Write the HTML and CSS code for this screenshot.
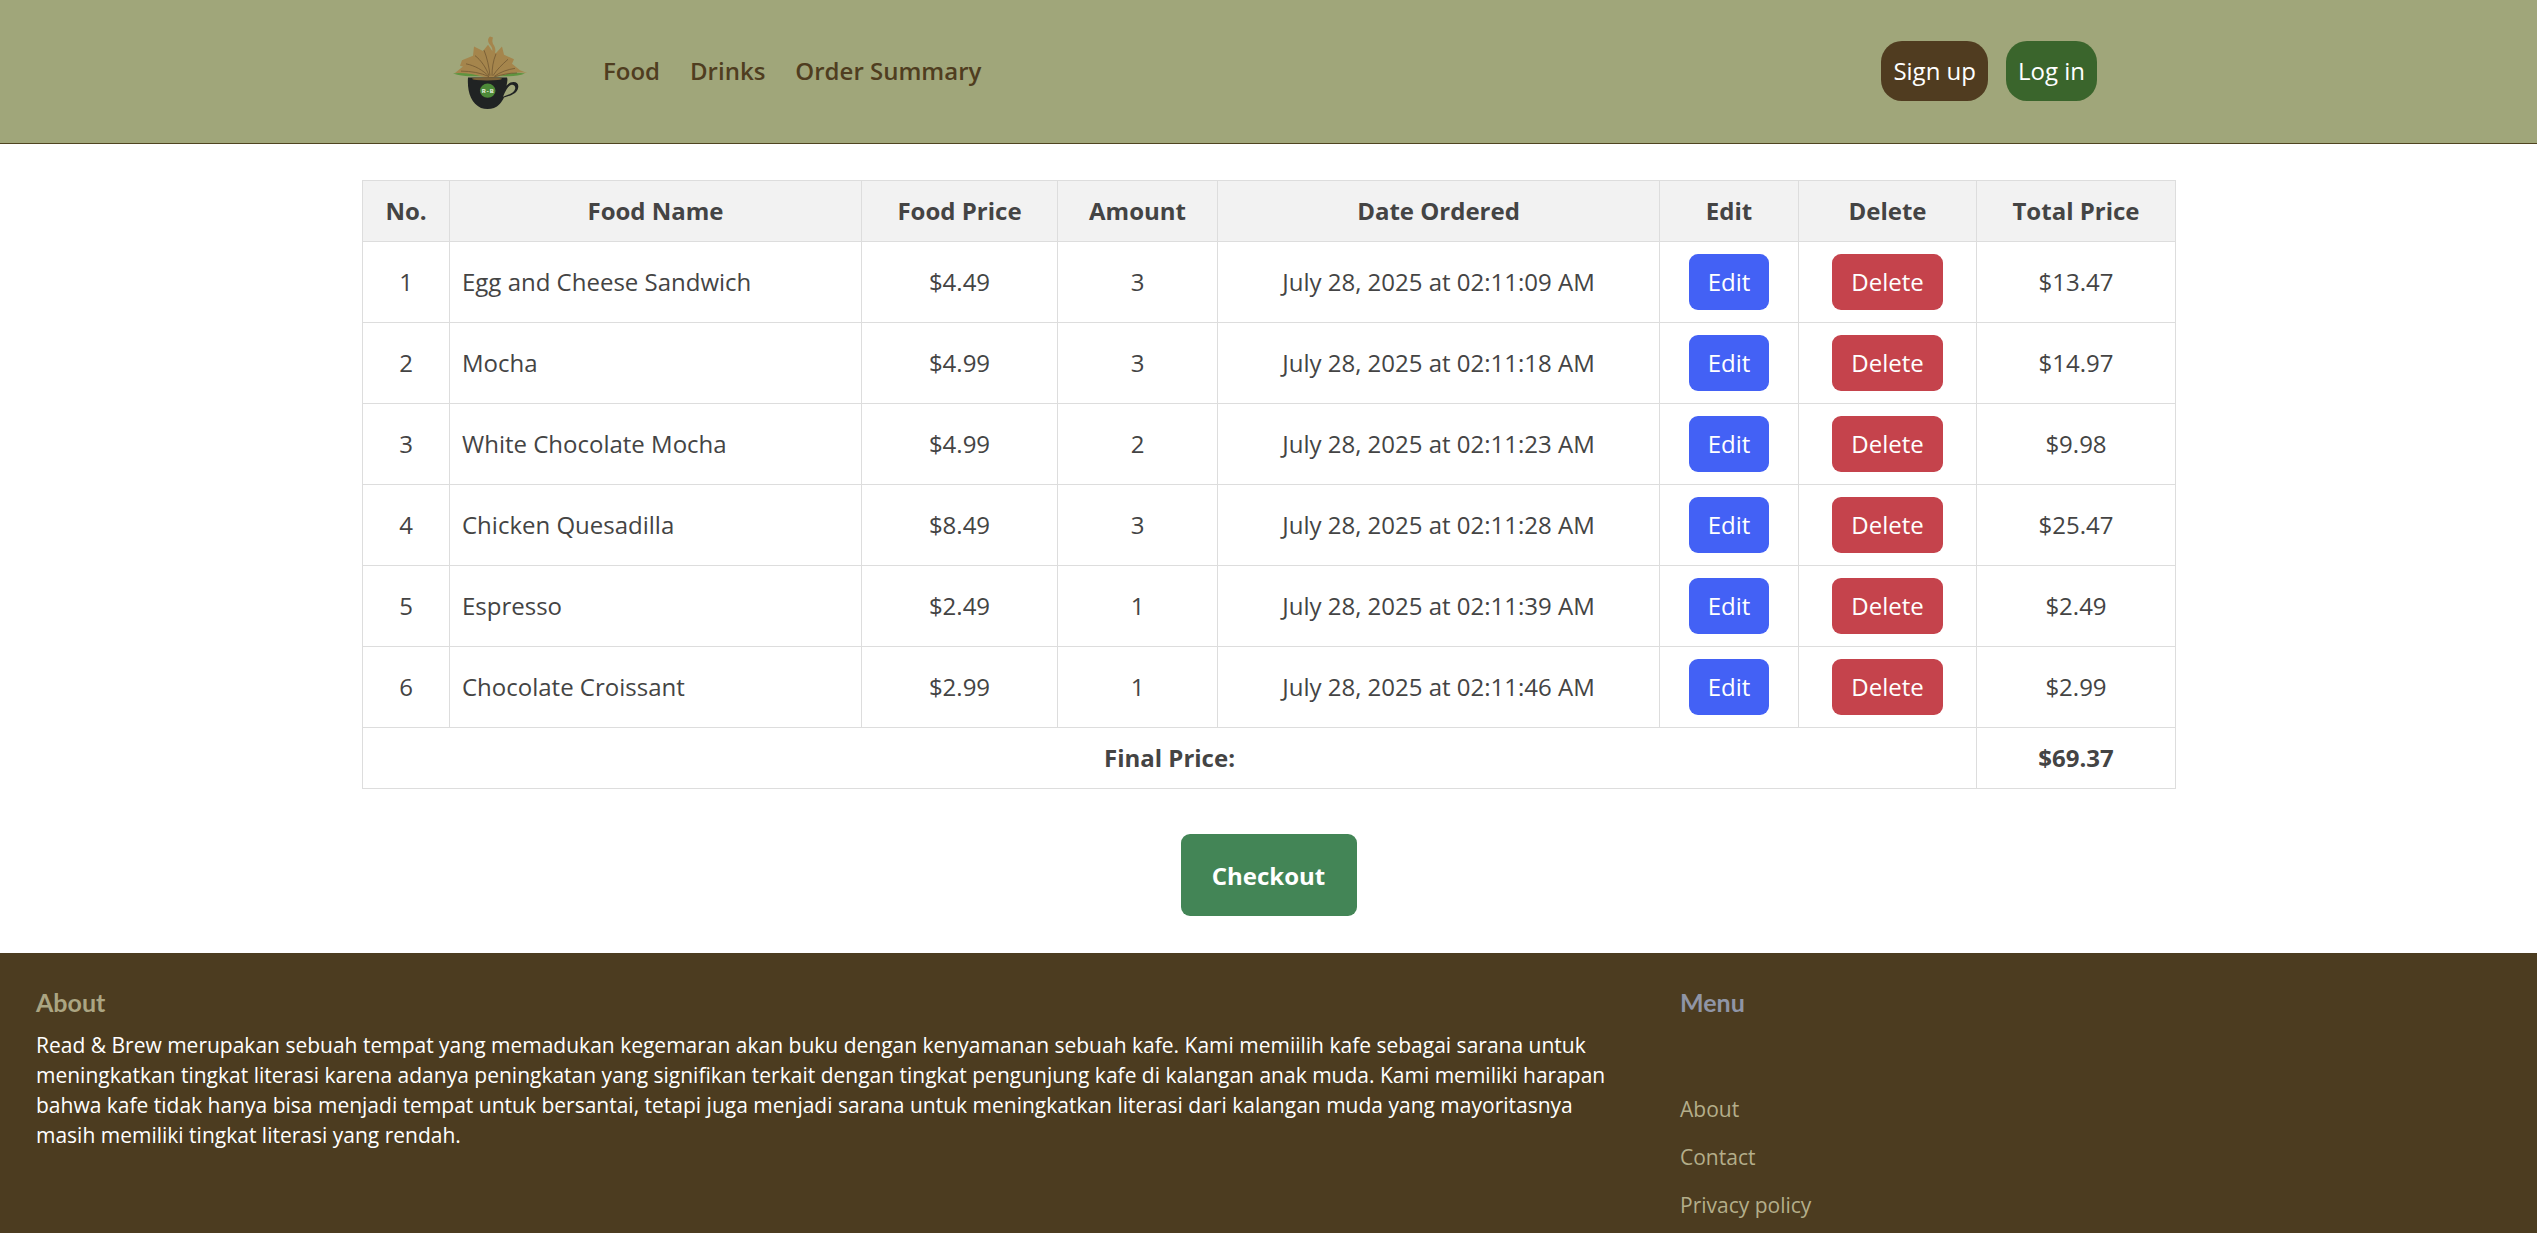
FILE: index.html
```html
<!DOCTYPE html>
<html lang="en">
<head>
<meta charset="utf-8">
<title>Order Summary</title>
<link rel="stylesheet" href="styles.css">
</head>
<body>
<header class="navbar">
  <div class="nav-inner">
    <a class="brand" href="#" aria-label="Read and Brew">
      <svg class="logo" viewBox="0 0 100 90" width="100" height="90">
        <g transform="translate(0 2.300) scale(1 .911)">
          <path d="M13 49.500c8-1 12-1 18 0l19 4 19-4c6-1 10-1 16 0-5 2-10 3-16 3H30c-6 0-11-1-17-3z" fill="#5f9440"/>
          <path d="M50 9c-3 3-2 6 0 9 3 4 3 7 1 10l2 3c3-4 3-8 1-12-2-3-2-6-1-9z" fill="#a5854c"/>
          <path d="M15 49l8-7-3-1 2-6 11-5 1-10 9 5 5-7 5 8 3 1 6-7 2 9 10 5-2 5 8 7 7 3c-9-1-16 0-22 2l-15 4-15-4c-7-2-13-2-20-2z" fill="#a5854c"/>
          <path d="M21 47c10 0 20 2 28 6M26 39c9 2 17 7 23 14M35 30c6 5 11 13 14 22M44 24c3 8 5 18 6 28M52 52c0-8 1-16 4-24M53 52c4-7 9-12 15-18M54 53c6-5 14-8 21-9M55 53c7-2 14-4 22-4" fill="none" stroke="#6e5530" stroke-width=".8"/>
          <path d="M28 54h39c1 3 0 6-.5 9 2-2.500 4-4 7-4 4 0 5.500 3 4.500 7-1 5-7 8-14 10-2 5-6 10-10 11.500-4 1.500-9 1.500-13 0-10-5-14-18-13-33.500z" fill="#202323"/>
          <path d="M63 75c6-2 11-4 12-8 1-3-1-5-3-5-3 0-6 5-9 13z" fill="#a0a67a"/>
          <ellipse cx="47" cy="55.500" rx="15" ry="1.800" fill="#7d6337"/>
          <circle cx="47.700" cy="68.500" r="7.800" fill="#4d8a38"/>
          <text class="logo-text" x="47.700" y="70.500">R-B</text>
        </g>
      </svg>
    </a>
    <nav class="nav-links">
      <a href="#">Food</a>
      <a href="#">Drinks</a>
      <a href="#">Order Summary</a>
    </nav>
    <div class="nav-actions">
      <a class="pill pill-brown" href="#">Sign up</a>
      <a class="pill pill-green" href="#">Log in</a>
    </div>
  </div>
</header>

<main class="content">
  <table class="orders">
    <colgroup>
      <col class="c-no"><col class="c-name"><col class="c-price"><col class="c-amount"><col class="c-date"><col class="c-edit"><col class="c-del"><col class="c-total">
    </colgroup>
    <thead>
      <tr><th>No.</th><th>Food Name</th><th>Food Price</th><th>Amount</th><th>Date Ordered</th><th>Edit</th><th>Delete</th><th>Total Price</th></tr>
    </thead>
    <tbody>
      <tr><td>1</td><td class="left">Egg and Cheese Sandwich</td><td>$4.49</td><td>3</td><td>July 28, 2025 at 02:11:09 AM</td><td><a class="btn btn-edit" href="#">Edit</a></td><td><a class="btn btn-del" href="#">Delete</a></td><td>$13.47</td></tr>
      <tr><td>2</td><td class="left">Mocha</td><td>$4.99</td><td>3</td><td>July 28, 2025 at 02:11:18 AM</td><td><a class="btn btn-edit" href="#">Edit</a></td><td><a class="btn btn-del" href="#">Delete</a></td><td>$14.97</td></tr>
      <tr><td>3</td><td class="left">White Chocolate Mocha</td><td>$4.99</td><td>2</td><td>July 28, 2025 at 02:11:23 AM</td><td><a class="btn btn-edit" href="#">Edit</a></td><td><a class="btn btn-del" href="#">Delete</a></td><td>$9.98</td></tr>
      <tr><td>4</td><td class="left">Chicken Quesadilla</td><td>$8.49</td><td>3</td><td>July 28, 2025 at 02:11:28 AM</td><td><a class="btn btn-edit" href="#">Edit</a></td><td><a class="btn btn-del" href="#">Delete</a></td><td>$25.47</td></tr>
      <tr><td>5</td><td class="left">Espresso</td><td>$2.49</td><td>1</td><td>July 28, 2025 at 02:11:39 AM</td><td><a class="btn btn-edit" href="#">Edit</a></td><td><a class="btn btn-del" href="#">Delete</a></td><td>$2.49</td></tr>
      <tr><td>6</td><td class="left">Chocolate Croissant</td><td>$2.99</td><td>1</td><td>July 28, 2025 at 02:11:46 AM</td><td><a class="btn btn-edit" href="#">Edit</a></td><td><a class="btn btn-del" href="#">Delete</a></td><td>$2.99</td></tr>
    </tbody>
    <tfoot>
      <tr><th colspan="7">Final Price:</th><th>$69.37</th></tr>
    </tfoot>
  </table>
  <div class="checkout-row"><a class="checkout" href="#">Checkout</a></div>
</main>

<footer class="footer">
  <section class="about">
    <h2 class="foot-title">About</h2>
    <p class="foot-text">Read &amp; Brew merupakan sebuah tempat yang memadukan kegemaran akan buku dengan kenyamanan sebuah kafe. Kami memiilih kafe sebagai sarana untuk meningkatkan tingkat literasi karena adanya peningkatan yang signifikan terkait dengan tingkat pengunjung kafe di kalangan anak muda. Kami memiliki harapan bahwa kafe tidak hanya bisa menjadi tempat untuk bersantai, tetapi juga menjadi sarana untuk meningkatkan literasi dari kalangan muda yang mayoritasnya masih memiliki tingkat literasi yang rendah.</p>
  </section>
  <section class="menu">
    <h2 class="foot-title foot-title-menu">Menu</h2>
    <ul class="foot-links">
      <li><a href="#">About</a></li>
      <li><a href="#">Contact</a></li>
      <li><a href="#">Privacy policy</a></li>
    </ul>
  </section>
</footer>
</body>
</html>
```

FILE: styles.css
```css
html, body { margin: 0; padding: 0; height: 1233px; overflow: hidden; background: #fff; }
body { font-family: "Open Sans", "Noto Sans", sans-serif; font-size: 24px; line-height: 1.5; color: #444; }
a { text-decoration: none; color: inherit; }

.navbar { height: 143px; background: #a0a67a; border-bottom: 1px solid #4f4420; }
.nav-inner { height: 100%; box-sizing: border-box; display: flex; align-items: center; padding: 0 440px 2px 440px; }
.brand { display: flex; }
.logo-text { font-family: "Liberation Mono", monospace; font-size: 6.500px; font-weight: 700; fill: #e8f0e0; text-anchor: middle; }
.nav-links { display: flex; gap: 30px; margin-left: 63px; color: #4f3d20; font-weight: 600; }
.nav-actions { display: flex; gap: 18px; margin-left: auto; }
.pill { height: 60px; display: flex; align-items: center; padding: 0 12px; border-radius: 21px; color: #fff; }
.pill-brown { background: #503c20; }
.pill-green { background: #3a652c; }

.content { padding-top: 36px; }
.orders { width: 1813px; margin: 0 0 0 362px; border-collapse: collapse; table-layout: fixed; }
.orders th, .orders td { border: 1.5px solid #ddd; padding: 12px; text-align: center; vertical-align: middle; }
.orders thead th { background: #f2f2f2; }
.orders td { height: 56px; }
.orders .left { text-align: left; }
.c-no { width: 87px; }
.c-name { width: 412px; }
.c-price { width: 196px; }
.c-amount { width: 160px; }
.c-date { width: 442px; }
.c-edit { width: 139px; }
.c-del { width: 178px; }
.c-total { width: 199px; }

.btn { display: inline-block; padding: 9px 18px; border: 1.5px solid transparent; border-radius: 9px; color: #fff; vertical-align: middle; }
.btn-edit { background: #4361f5; }
.btn-del { background: #c5434c; }

.checkout-row { display: flex; justify-content: center; margin-top: 45px; }
.checkout { width: 176px; height: 82px; display: flex; align-items: center; justify-content: center; padding-top: 2px; box-sizing: border-box; background: #438556; border-radius: 9px; color: #fff; font-weight: 700; }

.footer { margin-top: 37px; background: #4c3c20; display: grid; grid-template-columns: 1644px 1fr; padding: 31px 36px 0; height: 280px; }
.foot-title { margin: 0; font-family: "Lato", sans-serif; font-size: 25px; font-weight: 700; line-height: 36px; color: #aba582; }
.foot-title-menu { color: #9095a5; }
.foot-text { margin: 10px 0 0; width: 1600px; font-size: 21px; line-height: 30px; color: #fff; }
.foot-links { list-style: none; margin: 74px 0 0; padding: 0; font-size: 21px; line-height: 30px; color: #b4ae8a; }
.foot-links li { margin-bottom: 18px; }
```
